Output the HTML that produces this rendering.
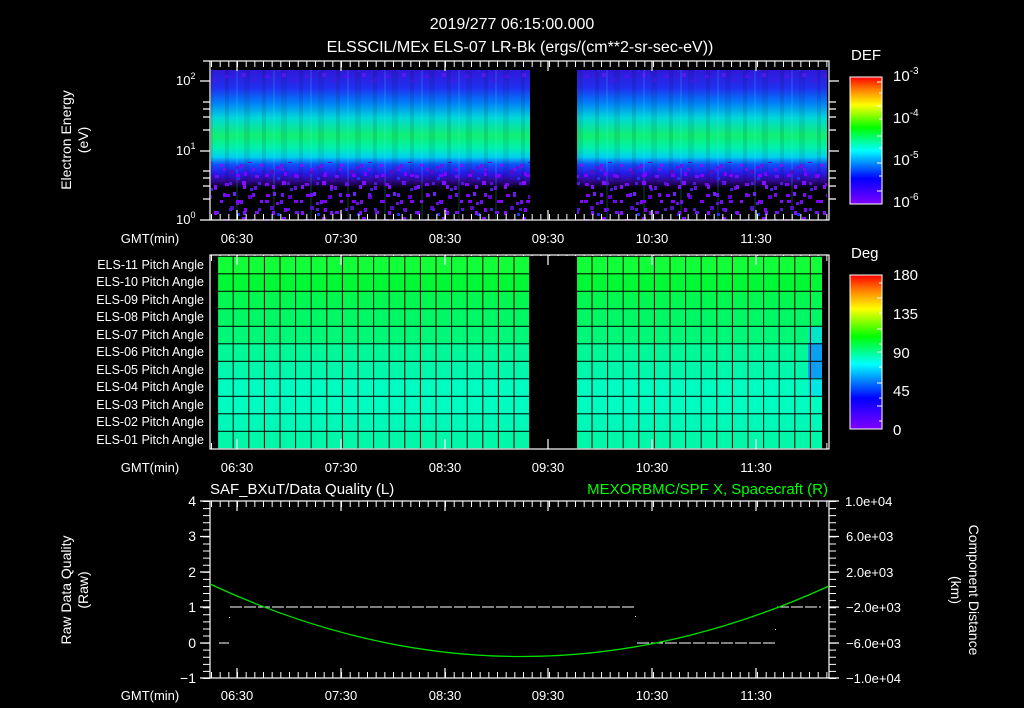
<!DOCTYPE html>
<html><head><meta charset="utf-8"><style>
html,body{margin:0;padding:0;background:#000;}
svg{display:block}
text{font-family:"Liberation Sans",sans-serif;fill:#fff}
</style></head><body>
<svg width="1024" height="708" viewBox="0 0 1024 708" xmlns="http://www.w3.org/2000/svg">
<defs>
<linearGradient id="cbar" x1="0" y1="1" x2="0" y2="0">
<stop offset="0" stop-color="#8000ff"/><stop offset="0.2" stop-color="#0000ff"/>
<stop offset="0.42" stop-color="#00ffff"/><stop offset="0.6" stop-color="#00ff00"/>
<stop offset="0.78" stop-color="#ffff00"/><stop offset="0.9" stop-color="#ff8000"/>
<stop offset="1" stop-color="#ff0000"/></linearGradient>
<linearGradient id="spec" x1="0" y1="0" x2="0" y2="1">
<stop offset="0" stop-color="#3018d8"/><stop offset="0.12" stop-color="#2030f0"/>
<stop offset="0.22" stop-color="#0080f8"/><stop offset="0.32" stop-color="#00d8d8"/>
<stop offset="0.44" stop-color="#10f070"/><stop offset="0.52" stop-color="#00f0b0"/>
<stop offset="0.58" stop-color="#00d0f0"/><stop offset="0.63" stop-color="#1050f8"/>
<stop offset="0.69" stop-color="#2818e8"/><stop offset="0.74" stop-color="#300890"/>
<stop offset="0.79" stop-color="#000"/><stop offset="1" stop-color="#000"/></linearGradient>
<pattern id="vstr" width="37" height="200" patternUnits="userSpaceOnUse">
<rect x="3" y="0" width="4" height="200" fill="#000" opacity="0.1"/>
<rect x="14" y="0" width="2" height="200" fill="#40ffff" opacity="0.12"/>
<rect x="22" y="0" width="6" height="200" fill="#000" opacity="0.08"/>
</pattern>
<pattern id="noise" width="40" height="36" patternUnits="userSpaceOnUse">
<rect x="2" y="1" width="4" height="4" fill="#8010ff"/><rect x="14" y="6" width="3" height="4" fill="#6010e0"/>
<rect x="25" y="3" width="4" height="3" fill="#8000ff"/><rect x="33" y="12" width="3" height="4" fill="#7020ff"/>
<rect x="8" y="15" width="4" height="4" fill="#6000d0"/><rect x="20" y="20" width="3" height="3" fill="#8010ff"/>
<rect x="30" y="26" width="4" height="4" fill="#5010c0"/><rect x="4" y="28" width="3" height="4" fill="#8000ff"/>
<rect x="15" y="31" width="4" height="3" fill="#7010f0"/><rect x="37" y="33" width="3" height="3" fill="#2030f0"/>
<rect x="10" y="8" width="3" height="3" fill="#4020e0"/><rect x="26" y="14" width="4" height="3" fill="#8000ff"/>
<rect x="0" y="20" width="3" height="4" fill="#7010f0"/><rect x="36" y="22" width="3" height="3" fill="#6010e0"/>
</pattern>
<pattern id="noise2" x="17" y="9" width="29" height="26" patternUnits="userSpaceOnUse">
<rect x="3" y="2" width="3" height="4" fill="#7010f0"/><rect x="16" y="9" width="4" height="3" fill="#8000ff"/>
<rect x="9" y="17" width="3" height="3" fill="#5018d0"/><rect x="23" y="20" width="3" height="4" fill="#8010ff"/>
</pattern>
<pattern id="grid" x="232.7" y="273.3" width="15.6" height="17.5" patternUnits="userSpaceOnUse">
<rect x="0" y="0" width="1" height="17.5" fill="#000"/><rect x="0" y="0" width="15.6" height="1" fill="#000"/></pattern>
</defs>

<text x="512" y="29" font-size="16" text-anchor="middle">2019/277 06:15:00.000</text>
<text x="520" y="52" font-size="16" text-anchor="middle">ELSSCIL/MEx ELS-07 LR-Bk  (ergs/(cm**2-sr-sec-eV))</text>

<rect x="211" y="70" width="319" height="150" fill="url(#spec)"/>
<rect x="577" y="70" width="250" height="150" fill="url(#spec)"/>
<rect x="211" y="70" width="319" height="150" fill="url(#vstr)"/>
<rect x="577" y="70" width="250" height="150" fill="url(#vstr)"/>
<rect x="211" y="162" width="319" height="58" fill="url(#noise)"/>
<rect x="577" y="162" width="250" height="58" fill="url(#noise)"/>
<rect x="211" y="168" width="319" height="52" fill="url(#noise2)"/>
<rect x="577" y="168" width="250" height="52" fill="url(#noise2)"/>
<rect x="211" y="70" width="319" height="14" fill="url(#noise)" opacity="0.5"/>
<rect x="577" y="70" width="250" height="14" fill="url(#noise)" opacity="0.5"/>
<rect x="210" y="61" width="619" height="159" fill="none" stroke="#fff" stroke-width="1.2"/>
<g stroke="#fff" stroke-width="6" stroke-dasharray="1 7.667" fill="none">
<path d="M211 64H829M211 217H829M211 258H829M211 446H829M211 504H829M211 675H829"/>
</g>
<g stroke="#fff" stroke-width="7" stroke-dasharray="1 6.08" fill="none">
<path d="M206.5 501V679M832.5 501V679"/>
</g>
<g stroke="#fff" stroke-width="1.2">
<path d="M200 220h10M203 199h7M203 186h7M203 178h7M203 171h7M200 151h10M203 130h7M203 117h7M203 109h7M203 102h7M200 81h10M203 61h7"/>
<path d="M829 199h7M829 186h7M829 178h7M829 171h7M829 151h10M829 130h7M829 117h7M829 109h7M829 102h7M829 81h10"/>
<path d="M237 61v10M341 61v10M445 61v10M548 61v10M652 61v10M756 61v10M237 220v-10M341 220v-10M445 220v-10M548 220v-10M652 220v-10M756 220v-10"/>
</g>
<text x="176" y="224" font-size="13">10<tspan font-size="9" dy="-6">0</tspan></text>
<text x="176" y="155" font-size="13">10<tspan font-size="9" dy="-6">1</tspan></text>
<text x="176" y="85" font-size="13">10<tspan font-size="9" dy="-6">2</tspan></text>
<text transform="translate(71,140) rotate(-90)" font-size="14" text-anchor="middle">Electron Energy</text>
<text transform="translate(88,140) rotate(-90)" font-size="14" text-anchor="middle">(eV)</text>
<g font-size="13" text-anchor="middle">
<text x="237" y="243">06:30</text><text x="341" y="243">07:30</text><text x="445" y="243">08:30</text><text x="548" y="243">09:30</text><text x="652" y="243">10:30</text><text x="756" y="243">11:30</text>
<text x="150" y="243">GMT(min)</text>
<text x="237" y="472">06:30</text><text x="341" y="472">07:30</text><text x="445" y="472">08:30</text><text x="548" y="472">09:30</text><text x="652" y="472">10:30</text><text x="756" y="472">11:30</text>
<text x="150" y="472">GMT(min)</text>
<text x="237" y="700">06:30</text><text x="341" y="700">07:30</text><text x="445" y="700">08:30</text><text x="548" y="700">09:30</text><text x="652" y="700">10:30</text><text x="756" y="700">11:30</text>
<text x="150" y="700">GMT(min)</text>
</g>

<text x="851" y="60" font-size="15">DEF</text>
<rect x="850" y="77" width="32" height="127" fill="url(#cbar)" stroke="#fff" stroke-width="1"/>
<g stroke="#fff" stroke-width="1"><path d="M882 82h-5M882 93h-3M882 106h-5M882 119h-3M882 136h-5M882 148h-3M882 163h-5M882 176h-3M882 191h-5"/></g>
<text x="893" y="81" font-size="15">10<tspan font-size="10" dy="-7">-3</tspan></text>
<text x="893" y="123" font-size="15">10<tspan font-size="10" dy="-7">-4</tspan></text>
<text x="893" y="165" font-size="15">10<tspan font-size="10" dy="-7">-5</tspan></text>
<text x="893" y="207" font-size="15">10<tspan font-size="10" dy="-7">-6</tspan></text>

<g>
<rect x="218" y="256" width="312" height="18" fill="#10ff38"/><rect x="577" y="256" width="245" height="18" fill="#10ff38"/>
<rect x="218" y="273" width="312" height="18" fill="#00f834"/><rect x="577" y="273" width="245" height="18" fill="#00f834"/>
<rect x="218" y="291" width="312" height="18" fill="#00f850"/><rect x="577" y="291" width="245" height="18" fill="#00f850"/>
<rect x="218" y="308" width="312" height="18" fill="#00f864"/><rect x="577" y="308" width="245" height="18" fill="#00f864"/>
<rect x="218" y="326" width="312" height="18" fill="#00f878"/><rect x="577" y="326" width="245" height="18" fill="#00f878"/>
<rect x="218" y="343" width="312" height="18" fill="#00f898"/><rect x="577" y="343" width="245" height="18" fill="#00f898"/>
<rect x="218" y="361" width="312" height="18" fill="#00f8ac"/><rect x="577" y="361" width="245" height="18" fill="#00f8ac"/>
<rect x="218" y="378" width="312" height="18" fill="#00fcc0"/><rect x="577" y="378" width="245" height="18" fill="#00fcc0"/>
<rect x="218" y="396" width="312" height="18" fill="#00fcc0"/><rect x="577" y="396" width="245" height="18" fill="#00fcc0"/>
<rect x="218" y="413" width="312" height="18" fill="#00f8b8"/><rect x="577" y="413" width="245" height="18" fill="#00f8b8"/>
<rect x="218" y="431" width="312" height="18" fill="#00f8a8"/><rect x="577" y="431" width="245" height="18" fill="#00f8a8"/>
<rect x="808" y="326" width="14" height="70" fill="#00d8ff" opacity="0.6"/>
<rect x="808" y="343" width="14" height="35" fill="#1070ff" opacity="0.6"/>
<rect x="218" y="256" width="604" height="193" fill="url(#grid)"/>
<rect x="530" y="256" width="47" height="193" fill="#000"/>
</g>
<rect x="210" y="255" width="619" height="194" fill="none" stroke="#fff" stroke-width="1.2"/>
<g stroke="#fff" stroke-width="1.2"><path d="M237 255v10M341 255v10M445 255v10M548 255v10M652 255v10M756 255v10M237 449v-10M341 449v-10M445 449v-10M548 449v-10M652 449v-10M756 449v-10"/></g>
<g font-size="12.5" text-anchor="end">
<text x="204" y="269">ELS-11 Pitch Angle</text><text x="204" y="286">ELS-10 Pitch Angle</text>
<text x="204" y="304">ELS-09 Pitch Angle</text><text x="204" y="321">ELS-08 Pitch Angle</text>
<text x="204" y="339">ELS-07 Pitch Angle</text><text x="204" y="356">ELS-06 Pitch Angle</text>
<text x="204" y="374">ELS-05 Pitch Angle</text><text x="204" y="391">ELS-04 Pitch Angle</text>
<text x="204" y="409">ELS-03 Pitch Angle</text><text x="204" y="426">ELS-02 Pitch Angle</text>
<text x="204" y="444">ELS-01 Pitch Angle</text>
</g>

<text x="851" y="258" font-size="15">Deg</text>
<rect x="850" y="275" width="32" height="154" fill="url(#cbar)" stroke="#fff" stroke-width="1"/>
<g stroke="#fff" stroke-width="1"><path d="M882 283h-3M882 298h-5M882 313h-3M882 329h-5M882 344h-3M882 352h-5M882 367h-3M882 383h-5M882 398h-3M882 406h-5M882 421h-3"/></g>
<g font-size="15"><text x="893" y="280">180</text><text x="893" y="319">135</text><text x="893" y="358">90</text><text x="893" y="396">45</text><text x="893" y="435">0</text></g>

<text x="210" y="494" font-size="15">SAF_BXuT/Data Quality (L)</text>
<text x="828" y="494" font-size="15" text-anchor="end" style="fill:#00ff00">MEXORBMC/SPF X, Spacecraft (R)</text>
<rect x="210" y="501" width="619" height="177" fill="none" stroke="#fff" stroke-width="1.2"/>
<g stroke="#fff" stroke-width="1.2"><path d="M200 501h10M200 536.5h10M200 572h10M200 607h10M200 643h10M200 678h10M829 501h10M829 536.5h10M829 572h10M829 607h10M829 643h10M829 678h10M237 501v10M341 501v10M445 501v10M548 501v10M652 501v10M756 501v10M237 678v-10M341 678v-10M445 678v-10M548 678v-10M652 678v-10M756 678v-10"/></g>
<g font-size="14" text-anchor="end"><text x="196" y="506">4</text><text x="196" y="541">3</text><text x="196" y="577">2</text><text x="196" y="612">1</text><text x="196" y="648">0</text><text x="196" y="683">−1</text></g>
<g font-size="13"><text x="845" y="506">1.0e+04</text><text x="846" y="541">6.0e+03</text><text x="846" y="577">2.0e+03</text><text x="846" y="612">−2.0e+03</text><text x="846" y="648">−6.0e+03</text><text x="846" y="683">−1.0e+04</text></g>
<text transform="translate(71,590) rotate(-90)" font-size="14" text-anchor="middle">Raw Data Quality</text>
<text transform="translate(88,590) rotate(-90)" font-size="14" text-anchor="middle">(Raw)</text>
<text transform="translate(969,590) rotate(90)" font-size="14" text-anchor="middle">Component Distance</text>
<text transform="translate(951,590) rotate(90)" font-size="14" text-anchor="middle">(km)</text>
<g stroke="#fff" stroke-width="1" stroke-dasharray="12,2">
<path d="M230 607H635M777 607H821M637 643H775"/></g>
<path d="M219 643H229" stroke="#fff" stroke-width="1"/>
<rect x="229" y="617" width="1" height="1" fill="#fff"/><rect x="635" y="616" width="1" height="1" fill="#fff"/><rect x="775" y="629" width="1" height="1" fill="#fff"/>
<path d="M210 584 Q519 728 829 586" fill="none" stroke="#00e000" stroke-width="1.3"/>
</svg>
</body></html>
